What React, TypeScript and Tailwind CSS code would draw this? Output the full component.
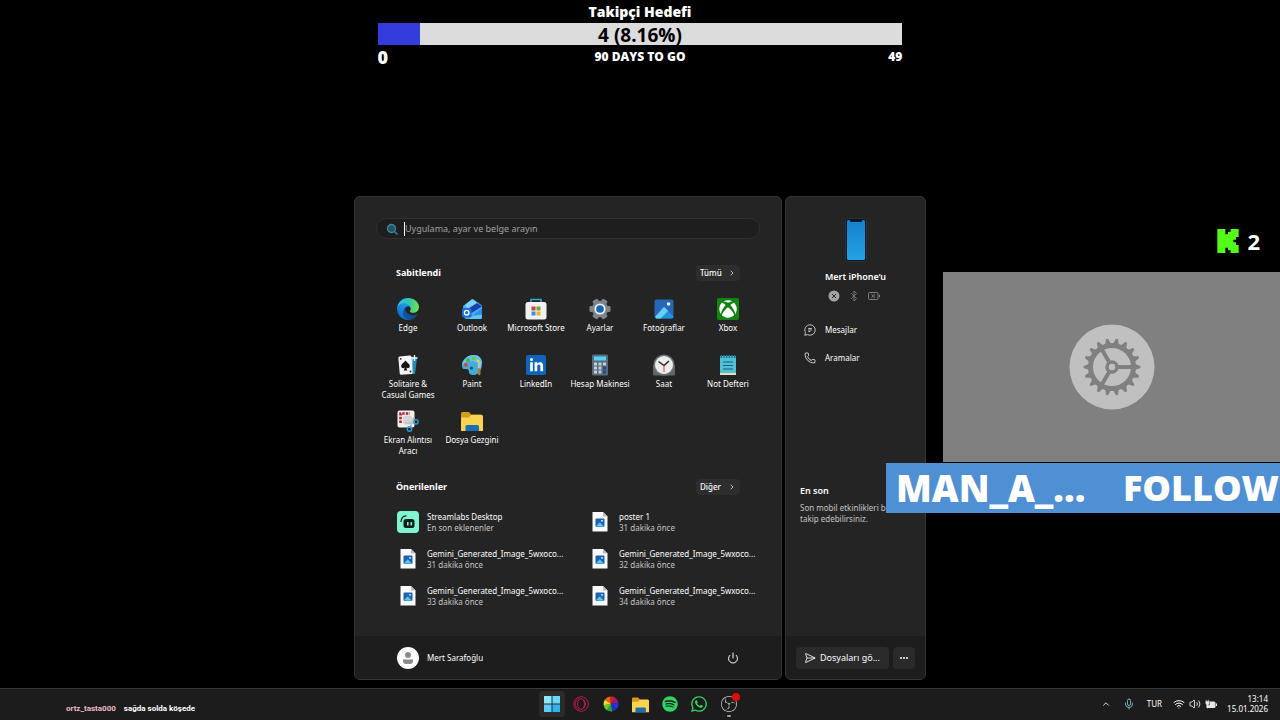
import { ReactNode } from 'react';
import { Bluetooth, ChevronRight, ChevronUp, Mic, Phone, Power, SendHorizontal, Volume2, Wifi } from 'lucide-react';
import { FaLinkedinIn, FaSpotify, FaWhatsapp, FaXbox } from 'react-icons/fa';
import { SiObsstudio } from 'react-icons/si';

interface App {
  label: string;
  icon: ReactNode;
}

interface RecentItem {
  title: string;
  detail: string;
  app?: boolean;
}

const EdgeIcon = () => (
  <svg viewBox="0 0 256 256" className="size-[22px]">
    <defs>
      <linearGradient id="edge-a" x1="60" y1="180" x2="240" y2="180" gradientUnits="userSpaceOnUse">
        <stop offset="0" stopColor="#0c59a4" />
        <stop offset="1" stopColor="#114a8b" />
      </linearGradient>
      <linearGradient id="edge-b" x1="150" y1="100" x2="45" y2="225" gradientUnits="userSpaceOnUse">
        <stop offset="0" stopColor="#1b9de2" />
        <stop offset="0.6" stopColor="#1484d8" />
        <stop offset="1" stopColor="#0f6cc0" />
      </linearGradient>
      <linearGradient id="edge-c" x1="20" y1="60" x2="250" y2="110" gradientUnits="userSpaceOnUse">
        <stop offset="0" stopColor="#35c1f1" />
        <stop offset="0.45" stopColor="#2cc3b5" />
        <stop offset="1" stopColor="#6be053" />
      </linearGradient>
    </defs>
    <g transform="translate(-4.63 -4.92)">
      <path fill="url(#edge-a)" d="M235.68 195.46a93.73 93.73 0 0 1-10.54 4.71 101.87 101.87 0 0 1-35.9 6.46c-47.32 0-88.54-32.55-88.54-74.32A31.48 31.48 0 0 1 117.13 105c-42.8 1.8-53.8 46.4-53.8 72.53 0 73.88 68.09 81.37 82.76 81.37 7.91 0 19.84-2.3 27-4.56l1.31-.44a128.34 128.34 0 0 0 66.6-52.8 4 4 0 0 0-5.32-5.64z" />
      <path fill="url(#edge-b)" d="M110.34 246.34A79.2 79.2 0 0 1 87.6 225a80.72 80.72 0 0 1 29.53-120c3.12-1.47 8.45-4.13 15.54-4a32.35 32.35 0 0 1 25.69 13 31.88 31.88 0 0 1 6.36 18.66c0-.21 24.46-79.6-80-79.6-43.9 0-80 41.66-80 78.21a130.15 130.15 0 0 0 12.11 56 128 128 0 0 0 156.38 67.11 75.55 75.55 0 0 1-62.78-8z" />
      <path fill="url(#edge-c)" d="M156.94 153.78c-.81 1.05-3.3 2.5-3.3 5.66 0 2.61 1.7 5.12 4.72 7.23 14.38 10 41.49 8.68 41.56 8.68a59.56 59.56 0 0 0 30.27-8.35 61.38 61.38 0 0 0 30.43-52.88c.26-22.41-8-37.31-11.34-43.91C228.09 28.76 182.35 4.92 132.61 4.92a128 128 0 0 0-128 126.2c.48-36.54 36.8-66.05 80-66.05 3.5 0 23.46.34 42 10.07 16.34 8.58 24.9 18.94 30.85 29.21 6.18 10.67 7.28 24.15 7.28 29.52s-2.74 13.33-7.8 19.91z" />
    </g>
  </svg>
);

const OutlookIcon = () => (
  <svg viewBox="0 0 22 22" className="size-[22px]">
    <path d="M2 8 10.5 1.4a2 2 0 0 1 2.2 0L21 7.5V19a2 2 0 0 1-2 2H6a3 3 0 0 1-3-3z" fill="#46b4f2" />
    <path d="M4 7 11 1.5l6 4-9 7z" fill="#7fd3fb" />
    <path d="M21 8.500 9 16l-4-4L16 5z" fill="#1d3fae" />
    <path d="M21 10v9a2 2 0 0 1-2 2H7z" fill="#2e90ea" />
    <path d="M21 17v2a2 2 0 0 1-2 2H7l5-3.500z" fill="#5cc8f8" />
    <rect x="1" y="10" width="9.500" height="9.500" rx="2" fill="#1c6fd8" />
    <circle cx="5.700" cy="14.700" r="2.300" fill="none" stroke="#fff" strokeWidth="1.300" />
  </svg>
);

const StoreIcon = () => (
  <svg viewBox="0 0 22 22" className="size-[22px]">
    <path d="M6 5V1.500h10V5" fill="none" stroke="#36a6cf" strokeWidth="1.500" />
    <rect x="0.500" y="4" width="21" height="17.500" rx="2.500" fill="#f1f1f1" />
    <rect x="6.500" y="8.500" width="4" height="4" fill="#d3432f" />
    <rect x="11.500" y="8.500" width="4" height="4" fill="#73a92c" />
    <rect x="6.500" y="13.500" width="4" height="4" fill="#2d9be0" />
    <rect x="11.500" y="13.500" width="4" height="4" fill="#eeb42b" />
  </svg>
);

const SettingsIcon = () => (
  <svg viewBox="0 0 22 22" className="size-[22px]">
    <g fill="#7f858b">
      {[0, 60, 120].map((angle) => (
        <rect key={angle} x="8" y="0.500" width="6" height="21" rx="1.300" transform={`rotate(${angle + 30} 11 11)`} />
      ))}
      <circle cx="11" cy="11" r="8.200" />
    </g>
    <circle cx="11" cy="11" r="5.600" fill="#e6f1fa" />
    <circle cx="11" cy="11" r="3.800" fill="#1664b4" />
  </svg>
);

const PhotosIcon = () => (
  <svg viewBox="0 0 22 22" className="size-[22px]">
    <rect x="1.500" y="1.500" width="19" height="19" rx="2" fill="#2867b8" />
    <path d="m2 19 8-9a1.500 1.500 0 0 1 2.300 0l8.200 8.500v.5a2 2 0 0 1-1.500 1.500H3.500z" fill="#2193d6" />
    <path d="m2 19 8-9a1.500 1.500 0 0 1 2.300 0L15 13l-7.500 7.500h-4z" fill="#63d0f5" />
    <circle cx="15.500" cy="6" r="1.800" fill="#e6f5fd" />
  </svg>
);

const XboxIcon = () => (
  <span className="flex size-[22px] items-center justify-center rounded-[2px] bg-[#138413]">
    <FaXbox className="size-[18px] text-white" />
  </span>
);

const SolitaireIcon = () => (
  <svg viewBox="0 0 22 22" className="size-[22px]">
    <path d="m9 2 11 2-2 16-9 0z" fill="#238bb8" />
    <path d="m8 2 8 1-1 17-6 0z" fill="#8fd4ee" />
    <rect x="2" y="2" width="13" height="18.500" rx="1.500" transform="rotate(-5 8 11)" fill="#f4f4f4" />
    <path d="M8.500 6.500c1.500 2.300 4.300 3.300 4.300 5.700 0 1.800-2.100 2.600-3.500 1.400l.9 2.900H6.800l.9-2.900c-1.400 1.200-3.500.4-3.500-1.400 0-2.400 2.800-3.400 4.300-5.700z" fill="#161616" />
    <circle cx="3.700" cy="4.800" r="0.900" fill="#222" />
    <circle cx="13.500" cy="17.500" r="0.900" fill="#222" />
    <path d="M17.500 1v6M14.500 4h6" stroke="#e9f8ff" strokeWidth="1.300" />
  </svg>
);

const PaintIcon = () => (
  <svg viewBox="0 0 22 22" className="size-[22px]">
    <path d="M13 1C6.500 1 1 6 1 11.500c0 3 1.500 4 3.500 3.500 2-.4 3.300.3 3.300 2.200C7.800 20 10 21 12.500 21 18 21 21 15.500 21 9.500 21 4 17.500 1 13 1z" fill="#45acd9" />
    <path d="M13 1C6.500 1 1 6 1 11.500c3-4 7-5 12-4s7 3 8 2C21 4 17.500 1 13 1z" fill="#62c6e8" />
    <circle cx="4.800" cy="11" r="1.900" fill="#d8463c" />
    <circle cx="7" cy="6.300" r="2" fill="#59ae3f" />
    <circle cx="12.500" cy="4.300" r="1.900" fill="#77c042" />
    <circle cx="17" cy="7" r="1.500" fill="#f2ce46" />
    <circle cx="10.500" cy="14" r="1.600" fill="#1f5278" />
    <path d="M16.500 8.500h3.500l-.5 6h-2.500z" fill="#b9c0c6" />
    <path d="M17 14.500h2.500V20a1.200 1.200 0 0 1-2.500 0z" fill="#b8763a" />
  </svg>
);

const LinkedInIcon = () => (
  <span className="flex size-[22px] items-center justify-center">
    <span className="flex size-5 items-center justify-center rounded-[2px] bg-[#0f64bd]">
      <FaLinkedinIn className="size-[15px] text-white" />
    </span>
  </span>
);

const CalculatorIcon = () => (
  <svg viewBox="0 0 22 22" className="size-[22px]">
    <rect x="3" y="0.500" width="16" height="21" rx="1.500" fill="#5b6b7a" />
    <rect x="5" y="2.500" width="12" height="4" fill="#51d6f2" />
    {[8.5, 12.5, 16.5].map((y) => (
      <g key={y}>
        <rect x="5" y={y} width="3" height="3" fill="#c6ced6" />
        <rect x="9.500" y={y} width="3" height="3" fill="#c6ced6" />
        <rect x="14" y={y} width="3" height="3" fill={y === 8.5 ? '#c6ced6' : '#164f94'} />
      </g>
    ))}
  </svg>
);

const ClockIcon = () => (
  <svg viewBox="0 0 22 22" className="size-[22px]">
    <path d="M0 11h22v9a1.500 1.500 0 0 1-1.500 1.500h-19A1.500 1.500 0 0 1 0 20z" fill="#616467" />
    <circle cx="11" cy="11" r="10.500" fill="#6f7376" />
    <circle cx="11" cy="11" r="9" fill="#eceded" />
    <path d="m5.500 7.500 5.500 4 5-4.500" fill="none" stroke="#252525" strokeWidth="1.500" />
    <path d="M11 11v7" stroke="#cf4436" strokeWidth="1" />
  </svg>
);

const NotepadIcon = () => (
  <svg viewBox="0 0 22 22" className="size-[22px]">
    <rect x="3" y="2" width="16" height="19" rx="1" fill="#51bfd6" />
    <path d="M3 19h16v2H3z" fill="#e9dcb8" />
    <path d="M3.500 2.500h15" stroke="#197b96" strokeWidth="3" strokeDasharray="1.500 1.200" />
    <path d="M6 8h10M6 11.500h10M6 15h10" stroke="#14627e" strokeWidth="1.100" />
  </svg>
);

const SnipIcon = () => (
  <svg viewBox="0 0 22 22" className="size-[22px]">
    <rect x="0.500" y="0.500" width="17" height="17" rx="2" fill="#f2eeee" />
    <path d="M3.500 13V3.500H13" fill="none" stroke="#b32035" strokeWidth="2.600" strokeDasharray="2.500 1.200" />
    <rect x="6" y="5.500" width="9" height="9" rx="2.500" fill="#d5d5d6" />
    <path d="m13 18 4-11M18 13H8" stroke="#bcc0c4" strokeWidth="1.500" />
    <circle cx="12.500" cy="19" r="2.200" fill="none" stroke="#2f9bd2" strokeWidth="1.400" />
    <circle cx="19" cy="11.800" r="2.200" fill="none" stroke="#2f9bd2" strokeWidth="1.400" />
  </svg>
);

const FolderIcon = ({ className }: { className: string }) => (
  <svg viewBox="0 0 22 22" className={className}>
    <path d="M0 3.500A1.500 1.500 0 0 1 1.500 2H8l2 2.500h10A1.500 1.500 0 0 1 21.500 6v4H0z" fill="#d79a1b" />
    <path d="M0 7.500h8L10 5h10.500A1.500 1.500 0 0 1 22 6.500V21H0z" fill="#fad351" />
    <path d="M4.500 21v-4.500A1.500 1.500 0 0 1 6 15h10.500a1.500 1.500 0 0 1 1.500 1.500V21z" fill="#1b6fb8" />
  </svg>
);

const StreamlabsIcon = () => (
  <svg viewBox="0 0 22 22" className="size-[22px]">
    <rect width="22" height="22" rx="4" fill="#80f5d2" />
    <rect x="6.500" y="8" width="11" height="9" rx="2.500" fill="#0b1f1b" />
    <path d="M4 10.500C4.300 7 6 5 9 4.800" fill="none" stroke="#0b1f1b" strokeWidth="1.200" strokeLinecap="round" />
    <rect x="10" y="11" width="1.600" height="3.500" rx="0.600" fill="#80f5d2" />
    <rect x="13.500" y="11" width="1.600" height="3.500" rx="0.600" fill="#80f5d2" />
  </svg>
);

const ImageFileIcon = () => (
  <svg viewBox="0 0 22 22" className="size-[22px]">
    <path d="M3.500 1h10.500l4.500 4.500V20.500h-15z" fill="#fafafa" />
    <path d="M14 1v4.500h4.500z" fill="#bdbdbd" />
    <rect x="6.500" y="7.500" width="9" height="8.500" rx="1" fill="#1c62b4" />
    <path d="m6.700 15.500 4-4.300 4.500 4.500z" fill="#5fc3ee" />
    <circle cx="13" cy="9.800" r="0.900" fill="#fff" />
  </svg>
);

const PhoneImage = () => (
  <svg viewBox="0 0 22 44" className="h-11 w-[22px]">
    <defs>
      <linearGradient id="phone-screen" x1="0" y1="0" x2="0" y2="1">
        <stop offset="0" stopColor="#1580cf" />
        <stop offset="1" stopColor="#23a3e2" />
      </linearGradient>
    </defs>
    <rect x="0.500" y="0.500" width="21" height="43" rx="3" fill="#10151b" stroke="#19374f" />
    <rect x="2" y="2" width="18" height="40" rx="1.500" fill="url(#phone-screen)" />
    <path d="M5 2h12v.5a1.500 1.500 0 0 1-1.500 1.500h-9A1.500 1.500 0 0 1 5 2.500z" fill="#10151b" />
  </svg>
);

const MessageIcon = () => (
  <svg viewBox="0 0 12 12" className="size-3" fill="none" stroke="#d6d6d6" strokeWidth="0.900">
    <path d="M6 .8a5.200 5.200 0 1 1-2.400 9.800L.8 11.300l.7-2.700A5.200 5.200 0 0 1 6 .8z" />
    <path d="M4.300 4.500h3.500M4.300 6h3.500M4.300 7.500h2" />
  </svg>
);

const OperaIcon = () => (
  <svg viewBox="0 0 16 16" className="size-4" fill="none" stroke="#b51c48" strokeWidth="1">
    <circle cx="8" cy="8" r="7.300" />
    <ellipse cx="8" cy="8" rx="3.500" ry="5.300" />
    <path d="M9.500 3.500c4 .5 4 8.500 0 9M6 2c-5 3-5 9 0 12" />
  </svg>
);

const WHEEL = ['#d81c1c', '#8e1f78', '#2338e0', '#2a2ac8', '#26a33c', '#5fd12c', '#f0d83a', '#e8641f'];

const ColorWheelIcon = () => (
  <svg viewBox="-8 -8 16 16" className="size-4">
    {WHEEL.map((color, i) => (
      <path key={color} d="M0 0V-7.500A7.500 7.500 0 0 1 5.400-5.200z" fill={color} transform={`rotate(${i * 45 - 10})`} />
    ))}
  </svg>
);

const WindowsIcon = () => (
  <svg viewBox="0 0 16 16" className="size-4">
    <path d="M0 0h7.500v7.500H0z" fill="#8be7fb" />
    <path d="M8.500 0H16v7.500H8.500z" fill="#66d7f8" />
    <path d="M0 8.500h7.500V16H0z" fill="#5bcdf6" />
    <path d="M8.500 8.500H16V16H8.500z" fill="#2fb4ee" />
  </svg>
);

const BatteryIcon = () => (
  <svg viewBox="0 0 12 12" className="size-3">
    <rect x="1.500" y="3.500" width="9" height="6.500" rx="1.500" fill="#e8e8e8" />
    <path d="M11 5.500h1v2.500h-1z" fill="#e8e8e8" />
    <path d="M0 2h5v3.500a2 2 0 0 1-2 2h-1a2 2 0 0 1-2-2z" fill="#1c1c1c" />
    <path d="M.8 3.200h3.500v2a1.500 1.500 0 0 1-1.300 1.500V10H2V6.700A1.500 1.500 0 0 1 .8 5.200zM1.300 1.700v1.500M3.700 1.700v1.500" fill="#e8e8e8" stroke="#e8e8e8" strokeWidth="0.500" />
  </svg>
);

const KickIcon = () => (
  <svg viewBox="0 0 8 9" className="h-6 w-[22px]">
    <path d="M0 0h3v2h1V1h1V0h3v3H7v1H6v1h1v1h1v3H5V8H4V7H3v2H0z" fill="#53fc18" />
  </svg>
);

const TEETH = Array.from({ length: 18 }, (_, i) => i * 20);

const GearIcon = () => (
  <svg viewBox="-43 -43 86 86" className="size-[86px]">
    <circle r="42.500" fill="#c0c0c0" />
    <g fill="none" stroke="#808080">
      <circle r="21.500" strokeWidth="5" />
      <circle r="5" strokeWidth="3.500" />
      {[0, 120, 240].map((angle) => (
        <path key={angle} d="M6 0h14" strokeWidth="4" transform={`rotate(${angle})`} />
      ))}
    </g>
    {TEETH.map((angle) => (
      <path key={angle} d="M22-3.300 27-1.600a1.600 1.600 0 0 1 0 3.200L22 3.300z" fill="#808080" transform={`rotate(${angle})`} />
    ))}
  </svg>
);

const PINNED: App[] = [
  { label: 'Edge', icon: <EdgeIcon /> },
  { label: 'Outlook', icon: <OutlookIcon /> },
  { label: 'Microsoft Store', icon: <StoreIcon /> },
  { label: 'Ayarlar', icon: <SettingsIcon /> },
  { label: 'Fotoğraflar', icon: <PhotosIcon /> },
  { label: 'Xbox', icon: <XboxIcon /> },
  { label: 'Solitaire & Casual Games', icon: <SolitaireIcon /> },
  { label: 'Paint', icon: <PaintIcon /> },
  { label: 'LinkedIn', icon: <LinkedInIcon /> },
  { label: 'Hesap Makinesi', icon: <CalculatorIcon /> },
  { label: 'Saat', icon: <ClockIcon /> },
  { label: 'Not Defteri', icon: <NotepadIcon /> },
  { label: 'Ekran Alıntısı Aracı', icon: <SnipIcon /> },
  { label: 'Dosya Gezgini', icon: <FolderIcon className="size-[22px]" /> },
];

const RECENT: RecentItem[] = [
  { title: 'Streamlabs Desktop', detail: 'En son eklenenler', app: true },
  { title: 'poster 1', detail: '31 dakika önce' },
  { title: 'Gemini_Generated_Image_5wxoco...', detail: '31 dakika önce' },
  { title: 'Gemini_Generated_Image_5wxoco...', detail: '32 dakika önce' },
  { title: 'Gemini_Generated_Image_5wxoco...', detail: '33 dakika önce' },
  { title: 'Gemini_Generated_Image_5wxoco...', detail: '34 dakika önce' },
];

const TASKS: App[] = [
  { label: 'Başlat', icon: <WindowsIcon /> },
  { label: 'Opera GX', icon: <OperaIcon /> },
  { label: 'Renkler', icon: <ColorWheelIcon /> },
  { label: 'Dosya Gezgini', icon: <FolderIcon className="size-[17px]" /> },
  { label: 'Spotify', icon: <FaSpotify className="size-4 text-[#2fd566]" /> },
  { label: 'WhatsApp', icon: <FaWhatsapp className="size-[18px] text-[#35d366]" /> },
  { label: 'OBS Studio', icon: <SiObsstudio className="size-4 text-[#c9c9c9]" /> },
];

function GoalBar() {
  const current = 4;
  const goal = 49;
  const percent = (current / goal) * 100;

  return (
    <section className="mx-auto flex w-[41%] flex-col font-['Open_Sans',sans-serif] font-extrabold text-white">
      <h1 className="text-center text-[14px] leading-[23px]">Takipçi Hedefi</h1>
      <div className="relative h-[22px] bg-[#dcdcdc]">
        <div className="h-full bg-[#343cdb]" style={{ width: `${percent}%` }} />
        <span className="absolute inset-0 text-center text-[19px] leading-6 font-bold text-black">
          {current} ({percent.toFixed(2)}%)
        </span>
      </div>
      <div className="grid grid-cols-3 items-center text-[12px] leading-6">
        <span className="text-lg leading-6">0</span>
        <span className="text-center">90 DAYS TO GO</span>
        <span className="text-right">{goal}</span>
      </div>
    </section>
  );
}

function SectionHeader({ title, action }: { title: string; action: string }) {
  return (
    <div className="flex h-4 items-center justify-between px-5">
      <h2 className="text-[9px] leading-4 font-bold">{title}</h2>
      <button className="flex h-4 w-11 items-center justify-between rounded-sm bg-[#2d2d2d] pr-1 pl-1 text-[8px] font-medium">
        {action}
        <ChevronRight className="size-2" />
      </button>
    </div>
  );
}

function StartMenu() {
  return (
    <section className="flex w-[428px] flex-col overflow-hidden rounded-md border border-[#353535] bg-[#242424]">
      <div className="flex flex-1 flex-col px-[21px] pt-[21px]">
        <label className="flex h-[21px] items-center rounded-full border border-[#303030] bg-[#1e1e1e] pl-[9px]">
          <svg viewBox="0 0 12 12" className="mr-1.5 size-3 shrink-0" fill="none">
            <circle cx="5.500" cy="5.500" r="4" fill="#28505f" stroke="#3a8b96" strokeWidth="1.300" />
            <path d="m8.500 8.500 2.500 2.500" stroke="#2f80c8" strokeWidth="1.500" strokeLinecap="round" />
          </svg>
          <span className="h-[14px] w-px shrink-0 bg-white" />
          <input
            type="text"
            aria-label="Ara"
            placeholder="Uygulama, ayar ve belge arayın"
            className="w-full min-w-0 bg-transparent text-[9px] outline-none placeholder:text-[#a0a0a0]"
          />
        </label>

        <div className="mt-[26px]">
          <SectionHeader title="Sabitlendi" action="Tümü" />
          <div className="mt-[17px] grid auto-rows-[56px] grid-cols-6">
            {PINNED.map((app) => (
              <button key={app.label} className="flex flex-col items-center gap-0.5 text-[8px] leading-[11px]">
                {app.icon}
                <span className="text-center">{app.label}</span>
              </button>
            ))}
          </div>
        </div>

        <div className="mt-[13px]">
          <SectionHeader title="Önerilenler" action="Diğer" />
          <ul className="mt-2 grid auto-rows-[37px] grid-cols-2 items-center">
            {RECENT.map((item) => (
              <li key={item.title + item.detail} className="pl-[21px]">
                <button className="flex items-center gap-2 text-left text-[8px] leading-[11px] whitespace-nowrap">
                  {item.app ? <StreamlabsIcon /> : <ImageFileIcon />}
                  <span className="flex flex-col">
                    <span className="text-white">{item.title}</span>
                    <span className="text-[#c4c4c4]">{item.detail}</span>
                  </span>
                </button>
              </li>
            ))}
          </ul>
        </div>
      </div>

      <footer className="flex h-[43px] items-center justify-between bg-[#1d1d1d] px-[42px]">
        <button className="flex items-center gap-2 text-[8px]">
          <svg viewBox="0 0 22 22" className="size-[22px]">
            <circle cx="11" cy="11" r="11" fill="#fff" />
            <circle cx="11" cy="8" r="3" fill="#8b8b8b" />
            <path d="M6 12.500h10v1.500a3 3 0 0 1-3 3H9a3 3 0 0 1-3-3z" fill="#8b8b8b" />
          </svg>
          Mert Sarafoğlu
        </button>
        <button aria-label="Güç">
          <Power className="size-3" />
        </button>
      </footer>
    </section>
  );
}

function PhonePanel() {
  return (
    <section className="flex w-[141px] flex-col overflow-hidden rounded-md border border-[#353535] bg-[#242424]">
      <div className="flex flex-1 flex-col">
        <div className="flex flex-col items-center pt-[21px]">
          <PhoneImage />
          <h2 className="mt-2 text-[9px] leading-[14px] font-semibold">Mert iPhone’u</h2>
          <div className="mt-1.5 flex items-center gap-2 pr-1 text-[#8b8b8b]">
            <svg viewBox="0 0 12 12" className="size-3">
              <circle cx="6" cy="6" r="5.500" fill="#a3a3a3" />
              <path d="m4 4 4 4m0-4L4 8" stroke="#2a2a2a" strokeWidth="1" />
            </svg>
            <Bluetooth className="size-3" strokeWidth={1.5} />
            <svg viewBox="0 0 12 12" className="size-3" fill="none" stroke="currentColor" strokeWidth="0.900">
              <rect x="0.500" y="2.500" width="9.500" height="7" rx="1.200" />
              <path d="M11.500 4.700v2.600M3.500 4.300l3.500 3.400m0-3.400L3.500 7.700" />
            </svg>
          </div>
        </div>
        <div className="mt-[14px] flex flex-col items-start pl-[18px] text-[8px] leading-7">
          <button className="flex items-center gap-[9px]">
            <MessageIcon />
            Mesajlar
          </button>
          <button className="flex items-center gap-[9px]">
            <Phone className="size-3" strokeWidth={1.5} />
            Aramalar
          </button>
        </div>
        <div className="mt-auto mb-28 pl-[14px]">
          <h3 className="text-[9px] leading-[14px] font-semibold">En son</h3>
          <p className="mt-1 text-[8px] leading-[11px] text-[#c4c4c4]">Son mobil etkinlikleri buradan takip edebilirsiniz.</p>
        </div>
      </div>
      <footer className="flex h-[43px] items-center gap-1 bg-[#1d1d1d] px-2.5">
        <button className="flex h-[22px] flex-1 items-center gap-1 rounded-sm bg-[#2a2a2a] pl-2 text-[9px] whitespace-nowrap">
          <SendHorizontal className="size-3" strokeWidth={1.7} />
          Dosyaları gö...
        </button>
        <button aria-label="Diğer seçenekler" className="flex h-[22px] w-[22px] items-center justify-center gap-px rounded-sm bg-[#2a2a2a]">
          <span className="size-0.5 rounded-full bg-white" />
          <span className="size-0.5 rounded-full bg-white" />
          <span className="size-0.5 rounded-full bg-white" />
        </button>
      </footer>
    </section>
  );
}

// stream widgets float over the desktop, pinned to the right edge
function StreamOverlay() {
  return (
    <aside className="absolute right-0 bottom-[207px] flex w-[394px] flex-col font-['Open_Sans',sans-serif] font-bold text-white">
      <div className="mb-[17px] flex items-center justify-end gap-2 pr-5 text-[22px] leading-7">
        <KickIcon />
        <span>2</span>
      </div>
      <div className="mb-px ml-auto flex h-[190px] w-[337px] items-center justify-center bg-[#808080]">
        <GearIcon />
      </div>
      <div className="flex h-[50px] items-center justify-between overflow-hidden bg-[#4f90d5] pr-px pl-2.5 text-[37px] font-extrabold whitespace-nowrap">
        <span>MAN_A_...</span>
        <span className="text-4xl">FOLLOW</span>
      </div>
    </aside>
  );
}

function Taskbar() {
  return (
    <footer className="grid h-8 grid-cols-[1fr_auto_1fr] items-center border-t border-[#383838] bg-[#1c1c1c] pb-px">
      <p className="pt-2.5 pl-[66px] font-[Roboto,sans-serif] text-[8px] font-bold">
        <span className="mr-1.5 text-[#efb9c8]">ortz_tasta000</span> sağda solda köşede
      </p>
      <nav className="flex w-[203px] justify-between">
        {TASKS.map((task, i) => (
          <button
            key={task.label}
            aria-label={task.label}
            className={`relative flex size-[26px] items-center justify-center rounded-sm ${i === 0 ? 'bg-[#2b2b2b]' : ''}`}
          >
            {task.icon}
            {task.label === 'OBS Studio' && (
              <>
                <span className="absolute top-0.5 right-0.5 size-2 rounded-full bg-[#e00b12]" />
                <span className="absolute bottom-0 h-0.5 w-1 rounded-full bg-[#a0a0a0]" />
              </>
            )}
          </button>
        ))}
      </nav>
      <div className="flex items-center justify-end pr-3 text-[8px]">
        <ChevronUp className="mr-3 size-2.5" />
        <Mic className="mr-3 size-3 text-[#7fc4d6]" strokeWidth={1.7} />
        <span className="mr-[11px]">TUR</span>
        <div className="mr-2.5 flex items-center gap-1">
          <Wifi className="size-3" />
          <Volume2 className="size-3" strokeWidth={1.7} />
          <BatteryIcon />
        </div>
        <time className="text-right leading-[10px]">
          13:14
          <br />
          15.01.2026
        </time>
      </div>
    </footer>
  );
}

export default function App() {
  return (
    <div className="relative flex min-h-screen flex-col overflow-hidden bg-black font-['Noto_Sans',sans-serif] text-white">
      <GoalBar />
      <main className="mt-auto mb-2 flex h-[484px] justify-center gap-[3px]">
        <StartMenu />
        <PhonePanel />
      </main>
      <Taskbar />
      <StreamOverlay />
    </div>
  );
}
